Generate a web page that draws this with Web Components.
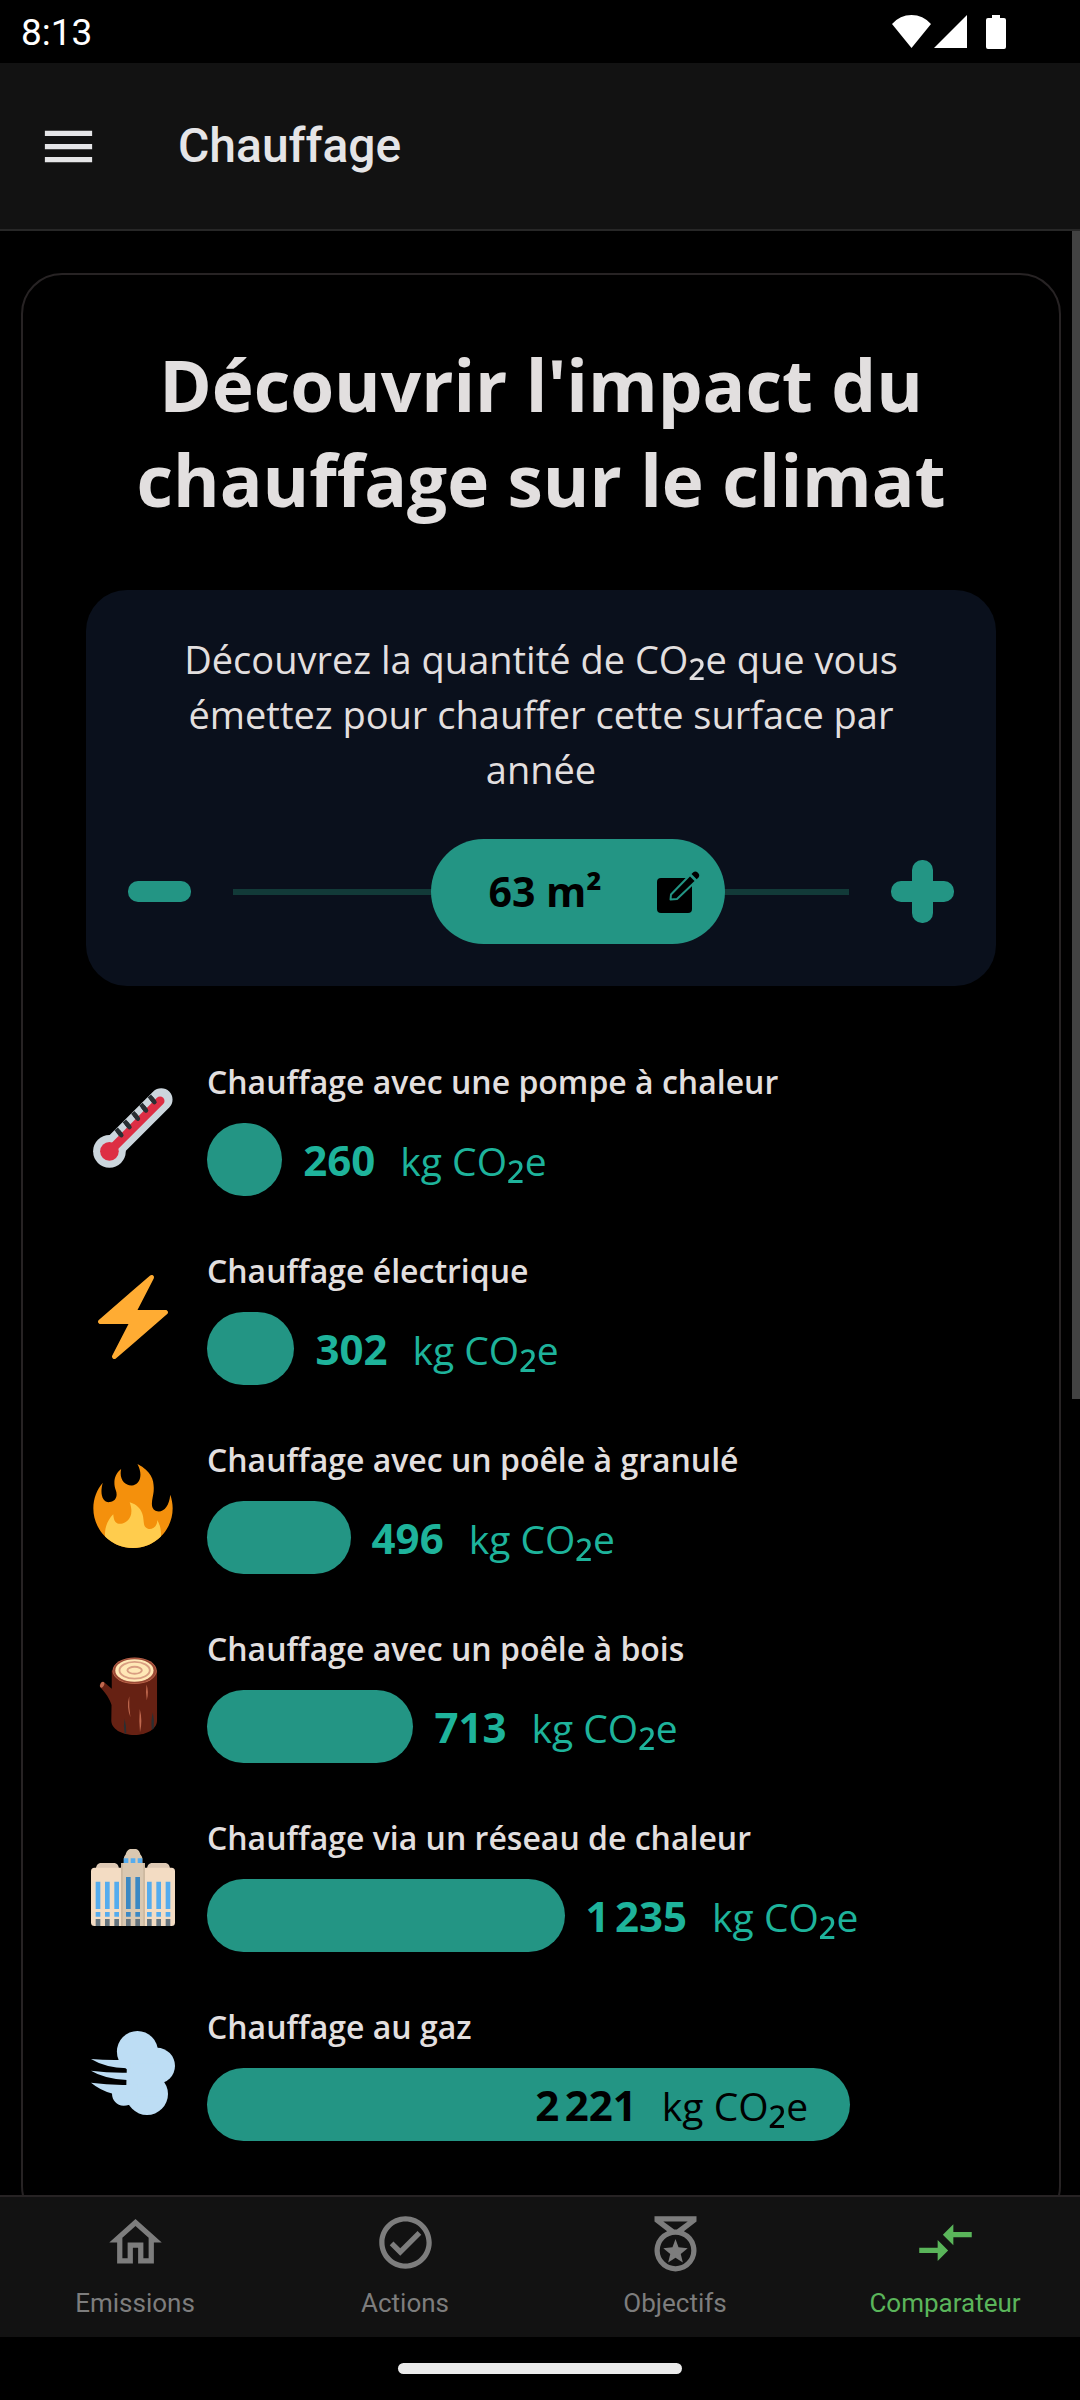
<!DOCTYPE html>
<html lang="fr">
<head>
<meta charset="utf-8">
<meta name="viewport" content="width=device-width, initial-scale=1">
<title>Chauffage</title>
<style>
  html, body { margin: 0; background: #000; }
  body { font-family: "Open Sans", "Noto Sans", sans-serif; color: #e2dfdf; }
  .sub { font-size: 1.3em; line-height: 0; }
</style>
</head>
<body>
<app-shell>
  <status-bar slot="top" time="8:13"></status-bar>
  <app-header slot="top">Chauffage</app-header>
  <impact-card>
    <span slot="title">Découvrir l'impact du chauffage sur le climat</span>
    <surface-picker value="63" min="10" max="96">Découvrez la quantité de CO<span class="sub">₂</span><span>e que vous </span><span>émettez pour chauffer cette surface par année</span></surface-picker>
    <impact-list>
      <impact-row icon="thermometer" value="260">Chauffage avec une pompe à chaleur</impact-row>
      <impact-row icon="bolt" value="302">Chauffage électrique</impact-row>
      <impact-row icon="fire" value="496">Chauffage avec un poêle à granulé</impact-row>
      <impact-row icon="wood" value="713">Chauffage avec un poêle à bois</impact-row>
      <impact-row icon="building" value="1235">Chauffage via un réseau de chaleur</impact-row>
      <impact-row icon="wind" value="2221" inside>Chauffage au gaz</impact-row>
    </impact-list>
  </impact-card>
  <tab-bar slot="bottom">
    <tab-link icon="home" href="#emissions">Emissions</tab-link>
    <tab-link icon="check" href="#actions">Actions</tab-link>
    <tab-link icon="medal" href="#objectifs">Objectifs</tab-link>
    <tab-link icon="compare" href="#comparateur" active>Comparateur</tab-link>
  </tab-bar>
  <gesture-bar slot="bottom"></gesture-bar>
</app-shell>

<script>
const define = (name, render) => customElements.define(name, class extends HTMLElement {
  connectedCallback() {
    if (this.shadowRoot) return;
    this.attachShadow({ mode: 'open' }).innerHTML = render(this);
  }
});

const repeat = (xs, f) => xs.map(f).join('');

const EMOJI = {
  thermometer: `
    <g stroke-linecap="round" fill="none">
      <path d="M7.9 28 30.1 5.8" stroke="#ccd6dd" stroke-width="9.7"/>
      <circle cx="7.9" cy="28" r="7" fill="#ccd6dd"/>
      <path d="M7.9 28 29.6 6.4" stroke="#dd2e44" stroke-width="3.8"/>
      <circle cx="7.9" cy="28" r="4" fill="#dd2e44"/>
    </g>
    <g fill="none" stroke="#292f33" stroke-width="1.9">
      <path d="M25 4.2l2 2.5M21.4 7.8l2 2.5M17.9 11.3l2 2.5M14.3 14.9l2 2.5M10.8 18.4l2 2.5"/>
      <path stroke-linecap="round" d="M26 5.4l1.2 1.5M22.4 9l1.2 1.5M18.9 12.5l1.2 1.5M15.3 16.1l1.2 1.5M11.8 19.6l1.2 1.5"/>
    </g>`,
  bolt: `<path fill="#ffac33" d="M32.938 15.651C32.792 15.26 32.418 15 32 15H19.925L26.89 1.458c.219-.426.106-.947-.271-1.243C26.437.071 26.218 0 26 0c-.233 0-.466.082-.653.243L18 6.588 3.347 19.243c-.316.273-.43.714-.284 1.105S3.582 21 4 21h12.075L9.11 34.542c-.219.426-.106.947.271 1.243.182.144.401.215.619.215.233 0 .466-.082.653-.243L18 29.412l14.653-12.655c.317-.273.43-.714.285-1.106z"/>`,
  fire: `
    <path fill="#f4900c" d="M35 19c0-2.062-.367-4.039-1.04-5.868-.46 5.389-3.333 8.157-6.335 6.868-2.812-1.208-.917-5.917-.777-8.164.236-3.809-.012-8.169-6.931-11.794 2.875 5.5.333 8.917-2.333 9.125-2.958.231-5.667-2.542-4.667-7.042-3.238 2.386-3.332 6.402-2.333 9 1.042 2.708-.042 4.958-2.583 5.208-2.84.28-4.418-3.041-2.963-8.333C2.52 10.965 1 14.805 1 19c0 9.389 7.611 17 17 17s17-7.611 17-17z"/>
    <path fill="#ffcc4d" d="M28.394 23.999c.148 3.084-2.561 4.293-4.019 3.709-2.106-.843-1.541-2.291-2.083-5.291s-2.625-5.083-5.708-6c2.25 6.333-1.247 8.667-3.08 9.084-1.872.426-3.753-.001-3.968-4.007C7.352 23.668 6 26.676 6 30c0 .368.023.73.055 1.09C9.125 34.124 13.342 36 18 36s8.875-1.876 11.945-4.91c.032-.36.055-.722.055-1.09 0-2.187-.584-4.236-1.606-6.001z"/>`,
  wood: `
    <path fill="#662113" d="M8.9 7.5h19.4v21.4c0 3.6-4.2 6.2-9.7 6.2s-9.9-2.6-9.9-6.2l.1-6.6C8.2 20 6.2 17 3.9 14.6 3.4 13.6 4.3 12.3 5.4 12.3L8.9 15.3z"/>
    <ellipse cx="4.8" cy="13.6" rx=".8" ry="1.3" transform="rotate(25 4.8 13.6)" fill="#c1694f"/>
    <ellipse cx="18.7" cy="7.6" rx="9.5" ry="5.7" fill="#c1694f"/>
    <ellipse cx="18.7" cy="7.6" rx="9.2" ry="5.4" fill="#9a4a36"/>
    <ellipse cx="18.6" cy="7.5" rx="8.2" ry="4.8" fill="#ffe8b6"/>
    <ellipse cx="18.7" cy="7.4" rx="6.5" ry="3.6" fill="none" stroke="#d99e82" stroke-width=".8"/>
    <ellipse cx="18.7" cy="7.4" rx="3.1" ry="1.5" fill="none" stroke="#d99e82" stroke-width=".8"/>
    <path fill="#c1694f" d="M16.4 18.5q-1.3 4.5.5 9-.7-4.5-.5-9zM23.8 13.5q1.1 3.2.1 6.8-.6-3.5-.1-6.8zM20.9 24q1.3 5 .1 10-.5-5-.1-10z"/>
    <path fill="#292f33" d="M14.4 28.2q-.6 3 0 6.2l.7.2q.1-3.3-.7-6.4zM26.5 25.5q-.9 3.5-.4 7.4l.8-.6q.3-3.7-.4-6.8z"/>`,
  building: `
    <path fill="#dec9b4" d="M2.1 12c0-2 .8-3 2.3-3h5.3c1.5 0 2.3 1 2.3 3zM24 12c0-2 .8-3 2.3-3h5.3c1.5 0 2.3 1 2.3 3z"/>
    <path fill="#f3dcc3" d="M1.5 11H14v25H1.5Q0 36 0 34.5v-22Q0 11 1.5 11zM22 11h12.5q1.5 0 1.5 1.5v22q0 1.5-1.5 1.5H22z"/>
    <path fill="#dac8b1" d="M12.9 9h1.2V7c0-1 .9-1.5.9-2.2C15.4 3.7 16.2 3 17 3h2c1 0 1.6.7 2 1.8 0 .7 1 1.2 1 2.2v2h1.1v27H12.9z"/>
    <path fill="#ccb89f" d="M12.9 9h.7v27h-.7zM22.4 9h.7v27h-.7z"/>
    <path fill="#55acee" d="M14 7h2v2h-2zM17 7h2v2h-2zM20 7h2v2h-2z"/>
    ${repeat([2, 6, 10, 24, 28, 32], x => `<path fill="#55acee" d="M${x} 17h2v11.7h-2zM${x} 30h2v2h-2z"/><path fill="#66757f" d="M${x} 33h2v3h-2z"/>`)}
    ${repeat([15, 19], x => `<path fill="#3b88c3" d="M${x} 15h2v13.7h-2zM${x} 30h2v2h-2z"/><path fill="#66757f" d="M${x} 33h2v3h-2z"/>`)}`,
  wind: `
    <g fill="#bdddf4">
      <circle cx="19.9" cy="8.8" r="8.8"/>
      <circle cx="28.3" cy="14.9" r="7.7"/>
      <circle cx="24" cy="27" r="9"/>
      <path d="M15.4 14H30v14H15z"/>
      <path d="M0 12q6 .5 12 .4L17 13v3h-1.6Q6 15.7 0 12zM0 17q7 1 14.9.9l4 .1v3h-3.500Q5.500 20.400 0 17zM0 22.200q7 1 14.900.9L20 23v8l-3.500.6Q15 32 14 32c-3 0-5-2.300-5-5.200Q4 25.500 0 22.200z"/>
    </g>`
};

const TAB_ICONS = {
  home: `<path d="M12 5.690l5 4.500V18h-2v-6H9v6H7v-7.810l5-4.500M12 3L2 12h3v8h6v-6h2v6h6v-8h3L12 3z"/>`,
  check: `<path d="M12 2C6.500 2 2 6.500 2 12s4.500 10 10 10 10-4.500 10-10S17.500 2 12 2m0 18c-4.410 0-8-3.590-8-8s3.590-8 8-8 8 3.590 8 8-3.590 8-8 8m4.590-12.420L10 14.170l-2.590-2.580L6 13l4 4 8-8-1.410-1.420z"/>`,
  medal: `<path fill-rule="evenodd" d="M4 2h16v2l-4.800 3.670A8 8 0 1 1 8.800 7.670L4 4zM7.350 4 11.500 7h1L16.650 4zM12 9a6 6 0 1 0 0 12 6 6 0 0 0 0-12zM12 10.700l1.150 3.150 3.500.3-2.650 2.250.8 3.200L12 17.800l-2.800 1.800.8-3.200-2.650-2.250 3.500-.3z"/>`,
  compare: `<path d="M9.010 14H2v2h7.010v3L13 15l-3.990-4v3zm5.980-1v-3H22V8h-7.010V5L11 9l3.990 4z"/>`
};

define('app-shell', () => `
  <style>
    :host { display: flex; flex-direction: column; height: 100vh; background: #000; }
    main { flex: 1; min-height: 0; overflow: hidden; position: relative; padding: 42px 19px 0 21px; }
    .thumb { position: absolute; top: 0; right: 0; width: 8px; height: 1168px; background: #424242; }
  </style>
  <slot name="top"></slot>
  <main><slot></slot><div class="thumb"></div></main>
  <slot name="bottom"></slot>`);

define('status-bar', el => `
  <style>
    :host { display: flex; align-items: center; justify-content: space-between; height: 63px;
      padding: 0 72px 0 21px; font: 400 37px/63px Roboto, sans-serif; color: #fff; }
    span { padding-top: 2px; }
    svg { display: block; }
  </style>
  <span>${el.getAttribute('time')}</span>
  <svg width="116" height="36" viewBox="0 0 116 36" fill="#fff" aria-hidden="true">
    <path d="M0 10Q8 1 19.500 1T39 10L19.500 34zM42 34 75 1v33zM100 1h8v3h4q2 0 2 2v27q0 2-2 2H96q-2 0-2-2V6q0-2 2-2h4z"/>
  </svg>`);

define('app-header', () => `
  <style>
    :host { display: flex; align-items: center; gap: 78px; height: 166px; padding: 0 37px;
      background: #121212; border-bottom: 2px solid #272727; color: #e5e5e7; }
    button { all: unset; display: flex; cursor: pointer; }
    h1 { margin: 0; font: 500 48px/64px Roboto, sans-serif; }
  </style>
  <button aria-label="Menu"><svg width="63" height="63" viewBox="0 0 24 24" fill="#e5e5e7"><path d="M3 18h18v-2H3v2zm0-5h18v-2H3v2zm0-7v2h18V6H3z"/></svg></button>
  <h1><slot></slot></h1>`);

define('impact-card', () => `
  <style>
    :host { display: block; box-sizing: border-box; padding: 62px 63px 84px; border: 2px solid #272324; border-radius: 41px; }
    h2 { margin: 0 0 63px; font-size: 71px; line-height: 95px; font-weight: 700; text-align: center; }
  </style>
  <h2><slot name="title"></slot></h2>
  <slot></slot>`);

define('surface-picker', el => {
  const min = +el.getAttribute('min'), max = +el.getAttribute('max'), value = +el.getAttribute('value');
  return `
  <style>
    :host { display: flex; flex-direction: column; gap: 42px; padding: 42px;
      background: #0a101c; border-radius: 41px; --accent: #239584; }
    p { margin: 0; padding: 0 13px; font-size: 38px; line-height: 55px; text-align: center; }
    .row { display: flex; align-items: center; gap: 42px; }
    button { all: unset; cursor: pointer; }
    .step { display: flex; }
    .slider { flex: 1; display: grid; align-items: center; --pos: ${(value - min) / (max - min)}; }
    .slider > * { grid-area: 1 / 1; }
    input { appearance: none; width: 100%; height: 105px; margin: 0; background: none; }
    input::-webkit-slider-runnable-track { height: 6px; background: #123a38; }
    input::-webkit-slider-thumb { appearance: none; width: 294px; height: 6px; background: none; }
    .pill { display: flex; align-items: center; justify-content: space-between; box-sizing: border-box;
      width: 294px; height: 105px; padding: 0 26px 0 57px; margin-left: calc((100% - 294px) * var(--pos));
      border-radius: 53px; background: var(--accent); color: #000; font-size: 41px; line-height: 55px; font-weight: 700; }
  </style>
  <p><slot></slot></p>
  <div class="row">
    <button class="step" aria-label="Moins"><svg width="63" height="63" viewBox="0 0 63 63"><rect y="21" width="63" height="21" rx="10" fill="#239584"/></svg></button>
    <div class="slider">
      <input type="range" min="${min}" max="${max}" value="${value}" aria-label="Surface">
      <button class="pill"><span>${value} m²</span>
        <svg width="42" height="42" viewBox="0 0 42 42" overflow="visible" aria-hidden="true">
          <rect y="7" width="35" height="35" rx="4"/>
          <path d="M13.500 28.500 14 23.500 33 4l6 6L20 28z" stroke="#239584" stroke-width="2" stroke-linejoin="round"/>
          <path d="M34.500 3 36.300 1.200q2.200-1.800 4.600.6t.6 4.600L39.700 8.200z"/>
        </svg>
      </button>
    </div>
    <button class="step" aria-label="Plus"><svg width="63" height="63" viewBox="0 0 63 63" fill="#239584"><rect y="21" width="63" height="21" rx="10"/><rect x="21" width="21" height="63" rx="10"/></svg></button>
  </div>`;
});

define('impact-list', () => `
  <style>:host { display: flex; flex-direction: column; gap: 53px; margin-top: 74px; }</style>
  <slot></slot>`);

define('impact-row', el => {
  const SCALE = 2725;
  const value = +el.getAttribute('value');
  const shown = String(value).replace(/\B(?=(\d{3})+$)/g, '\u202f');
  const amount = `<span class="amount"><b>${shown}</b><span>kg CO<span class="sub">₂</span>e</span></span>`;
  const inside = el.hasAttribute('inside');
  return `
  <style>
    :host { display: flex; align-items: center; gap: 32px; padding-left: 5px; }
    svg { flex: none; display: block; }
    .body { flex: 1; display: flex; flex-direction: column; gap: 19px; }
    .label { font-size: 32px; line-height: 44px; font-weight: 600; }
    .line { display: flex; align-items: center; gap: 21px; height: 73px; }
    .bar { display: flex; align-items: center; justify-content: flex-end; box-sizing: border-box;
      width: ${value / SCALE * 100}%; height: 73px; border-radius: 37px; background: #239584; }
    .amount { display: flex; align-items: baseline; gap: 25px; white-space: nowrap; font-size: 39px; line-height: 55px; color: #1eb39b; }
    b { font-size: 42px; font-weight: 700; }
    .sub { font-size: 1.3em; line-height: 0; }
    .bar .amount { color: #000; padding-right: 42px; }
  </style>
  <svg width="84" height="84" viewBox="0 0 36 36" aria-hidden="true">${EMOJI[el.getAttribute('icon')]}</svg>
  <div class="body">
    <div class="label"><slot></slot></div>
    <div class="line"><div class="bar">${inside ? amount : ''}</div>${inside ? '' : amount}</div>
  </div>`;
});

define('tab-bar', () => `
  <style>
    :host { display: block; background: #121212; border-top: 2px solid #272324; }
    nav { display: flex; height: 140px; }
  </style>
  <nav><slot></slot></nav>`);

define('tab-link', el => `
  <style>
    :host { flex: 1; display: flex; color: ${el.hasAttribute('active') ? '#5ab55a' : '#7d7d7d'}; }
    a { flex: 1; display: flex; flex-direction: column; align-items: center; gap: 13px; padding-top: 14px;
      color: inherit; text-decoration: none; font: 400 26px/32px Roboto, sans-serif; }
    svg { display: block; }
  </style>
  <a href="${el.getAttribute('href')}">
    <svg width="63" height="63" viewBox="0 0 24 24" fill="currentColor" aria-hidden="true">${TAB_ICONS[el.getAttribute('icon')]}</svg>
    <span><slot></slot></span>
  </a>`);

define('gesture-bar', () => `
  <style>
    :host { display: flex; align-items: center; justify-content: center; height: 63px; background: #000; }
    div { width: 284px; height: 11px; border-radius: 6px; background: #ebebeb; }
  </style>
  <div></div>`);
</script>
</body>
</html>
